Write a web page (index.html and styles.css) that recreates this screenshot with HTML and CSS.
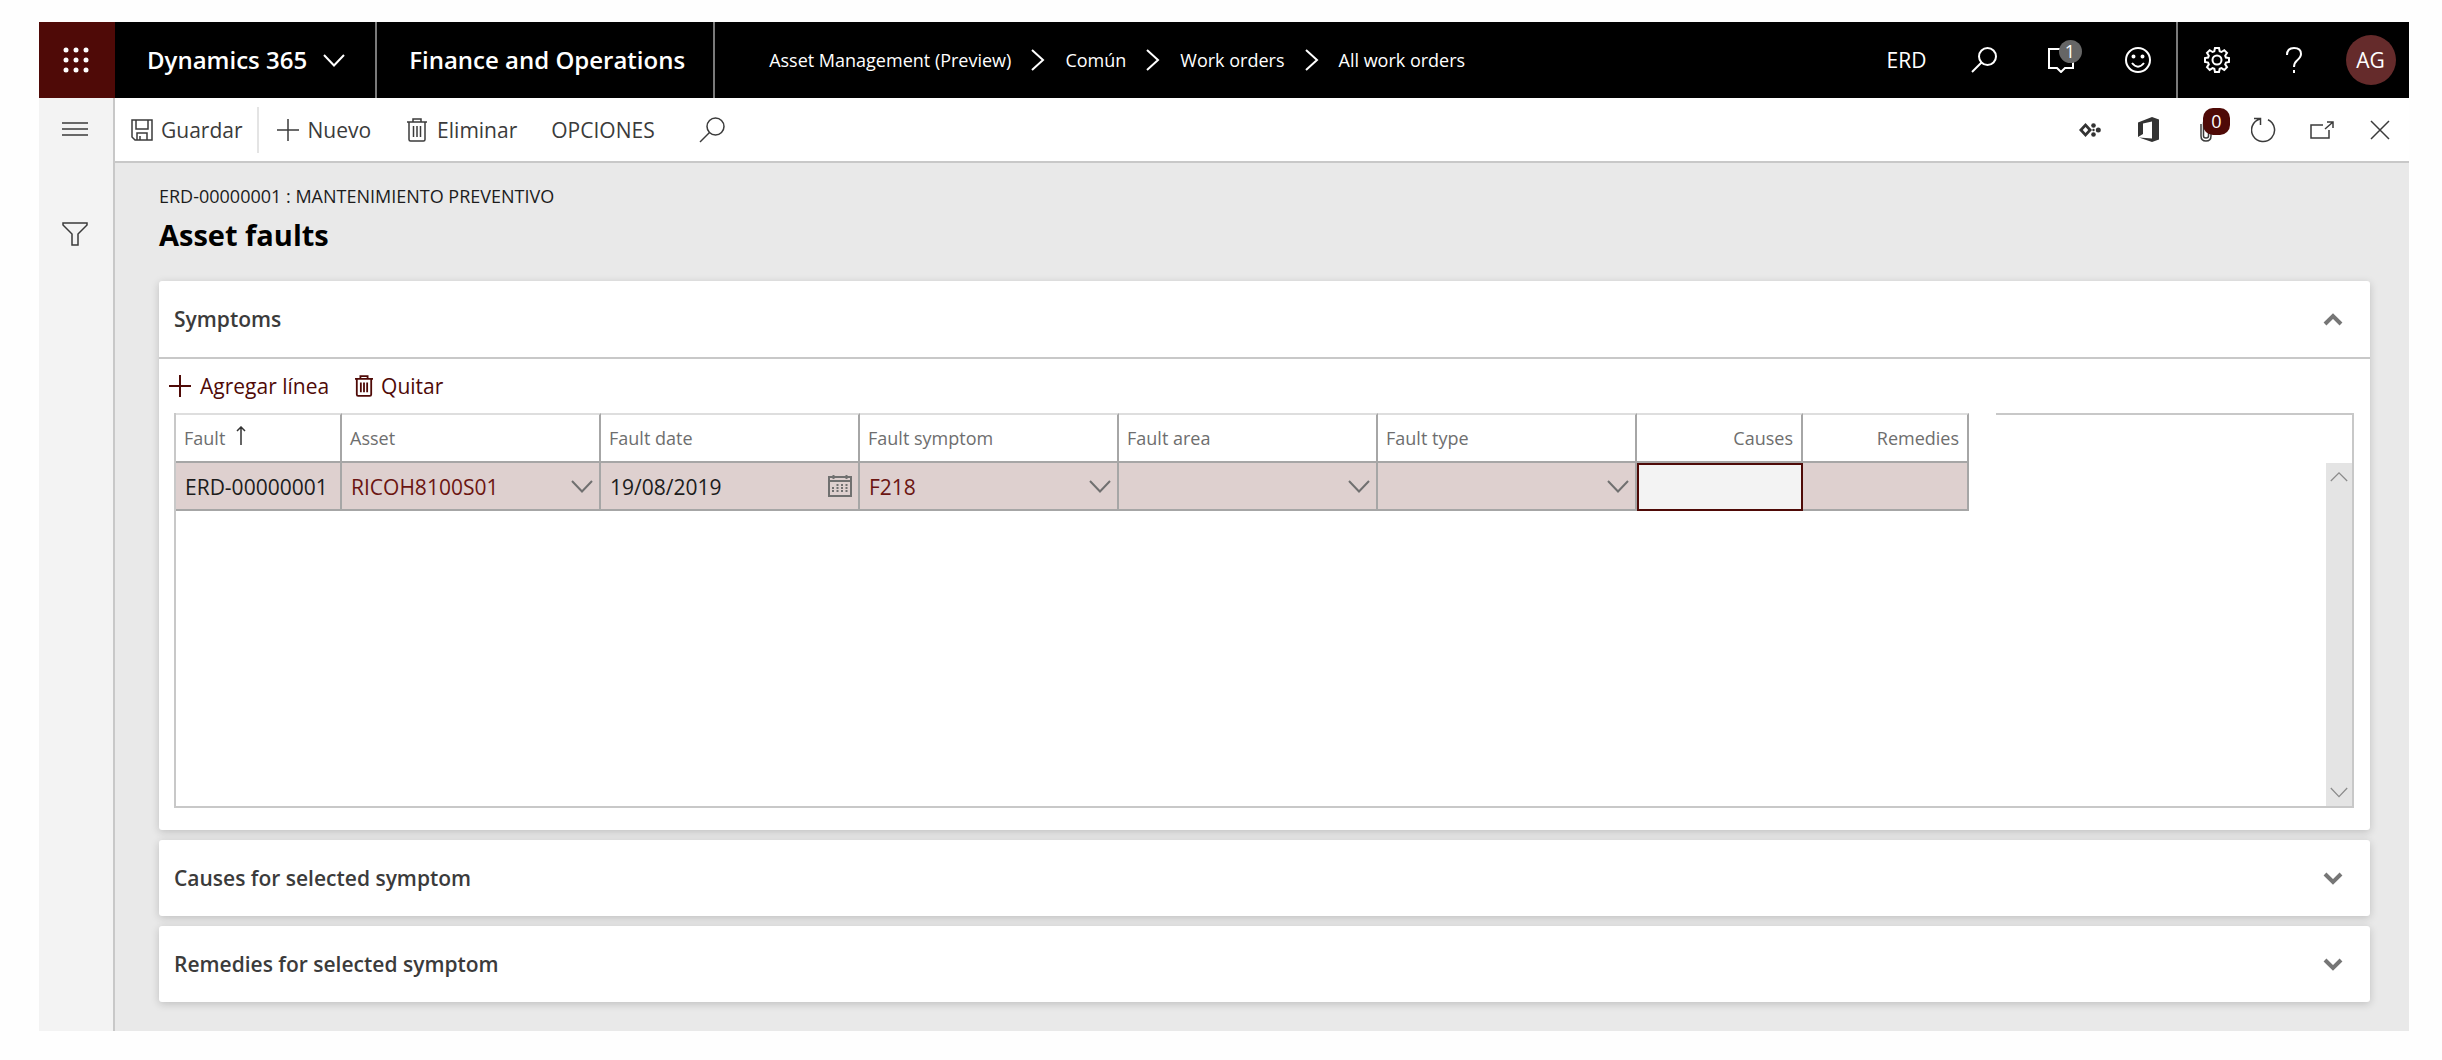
FILE: index.html
```html
<!DOCTYPE html>
<html lang="es">
<head>
  <meta charset="UTF-8">
  <title>Asset faults - Finance and Operations</title>
  <meta name="viewport" content="width=device-width, initial-scale=1.0">
  <link rel="stylesheet" href="styles.css">
</head>
<body>
  <!-- Shared icons -->
  <svg class="sprite" aria-hidden="true">
    <symbol id="chevron-down" viewBox="0 0 22 13"><path d="M1 1l10 10.500L21 1"/></symbol>
    <symbol id="chevron-right" viewBox="0 0 14 22"><path d="M1 1l11 10L1 21"/></symbol>
    <symbol id="search" viewBox="0 0 26 26"><circle cx="16.500" cy="9.500" r="8.500"/><path d="M10.500 15.500L1 25"/></symbol>
    <symbol id="plus" viewBox="0 0 24 24"><path d="M12 1v22M1 12h22"/></symbol>
    <symbol id="trash" viewBox="0 0 20 24"><path d="M0 4h20M6 4V1h8v3M2 4v17.500q0 1.500 1.500 1.500h13q1.500 0 1.500-1.500V4M6.500 8v11M10 8v11M13.500 8v11"/></symbol>
    <symbol id="calendar" viewBox="0 0 24 22"><path d="M1 2h22v19H1zM1 6h22M5.500 0v4M18.500 0v4"/><path stroke-dasharray="2 1" d="M9.500 9v8M14 9v8M18.500 9v8M5 12v6"/></symbol>
  </svg>

  <div class="app">
    <header class="topbar">
      <button class="waffle" aria-label="App launcher">
        <svg width="26" height="26" viewBox="0 0 26 26" fill="#fff">
          <circle cx="3" cy="3" r="2.500"/><circle cx="13" cy="3" r="2.500"/><circle cx="23" cy="3" r="2.500"/>
          <circle cx="3" cy="13" r="2.500"/><circle cx="13" cy="13" r="2.500"/><circle cx="23" cy="13" r="2.500"/>
          <circle cx="3" cy="23" r="2.500"/><circle cx="13" cy="23" r="2.500"/><circle cx="23" cy="23" r="2.500"/>
        </svg>
      </button>
      <button class="brand">Dynamics 365 <svg class="icon" width="22" height="13"><use href="#chevron-down"/></svg></button>
      <a class="product" href="#">Finance and Operations</a>
      <nav class="breadcrumb" aria-label="Breadcrumb">
        <a href="#">Asset Management (Preview)</a>
        <svg class="icon" width="14" height="22"><use href="#chevron-right"/></svg>
        <a href="#">Común</a>
        <svg class="icon" width="14" height="22"><use href="#chevron-right"/></svg>
        <a href="#">Work orders</a>
        <svg class="icon" width="14" height="22"><use href="#chevron-right"/></svg>
        <a href="#">All work orders</a>
      </nav>
      <div class="top-actions">
        <button class="company">ERD</button>
        <button aria-label="Search"><svg class="icon" width="26" height="26"><use href="#search"/></svg></button>
        <button aria-label="Messages">
          <span class="badged">
            <svg class="icon" width="26" height="26" viewBox="0 0 26 26"><path d="M1 2h24v19h-8l-4 4-4-4H1z"/></svg>
            <span class="badge badge-grey">1</span>
          </span>
        </button>
        <button aria-label="Feedback">
          <svg class="icon" width="26" height="26" viewBox="0 0 26 26"><circle cx="13" cy="13" r="12"/><path d="M7 16q6 7.500 12 0"/><circle class="solid" cx="8.500" cy="9.500" r="1"/><circle class="solid" cx="17.500" cy="9.500" r="1"/></svg>
        </button>
        <button class="divided" aria-label="Settings">
          <svg class="icon" width="26" height="26" viewBox="0 0 26 26"><circle cx="13" cy="13" r="4.500"/><path d="M11 1h4l.7 3.300 1.700.7 2.900-1.800 2.700 2.700-1.800 2.900.7 1.700L25 11v4l-3.100.6-.7 1.700 1.800 2.900-2.700 2.700-2.900-1.800-1.700.7L15 25h-4l-.7-3.200-1.700-.7-2.900 1.800L3 20.200l1.800-2.900-.7-1.700L1 15v-4l3.100-.5.700-1.700L3 5.900l2.700-2.700L8.600 5l1.700-.7z"/></svg>
        </button>
        <button aria-label="Help">
          <svg class="icon" width="18" height="26" viewBox="0 0 18 26"><path d="M2 8q0-7 7-7t7 6q0 3-4 6.500-3 2.500-3 6.500M9 23v3"/></svg>
        </button>
        <button aria-label="Account"><span class="avatar">AG</span></button>
      </div>
    </header>

    <div class="main">
      <aside class="rail">
        <button aria-label="Menu"><svg class="icon" width="26" height="14" viewBox="0 0 26 14"><path d="M0 1h26M0 7h26M0 13h26"/></svg></button>
        <button aria-label="Filter"><svg class="icon" width="26" height="24" viewBox="0 0 26 24"><path d="M1 1h24v2l-9 9v11h-6V12L1 3z"/></svg></button>
      </aside>

      <div class="workspace">
        <div class="toolbar">
          <button class="save">
            <svg class="icon" width="22" height="22" viewBox="0 0 22 22"><path d="M1 1h20v20H4l-3-3zM5 1v9h12V1M6 21v-7h10v7M9 21v-4"/></svg>
            Guardar
          </button>
          <button class="new"><svg class="icon" width="24" height="24"><use href="#plus"/></svg>Nuevo</button>
          <button class="delete"><svg class="icon" width="20" height="24"><use href="#trash"/></svg>Eliminar</button>
          <button class="options">OPCIONES</button>
          <button class="find" aria-label="Search actions"><svg class="icon" width="26" height="26"><use href="#search"/></svg></button>
          <div class="page-actions">
            <button aria-label="Power Apps">
              <svg width="22" height="14" viewBox="0 0 22 14" fill="#333"><path d="M6.500 0L13 7l-6.500 7L0 7zM6.500 4L3.800 7l2.700 3 2.700-3z" fill-rule="evenodd"/><circle cx="14.500" cy="2.500" r="2.300"/><circle cx="14.500" cy="11.500" r="2.300"/><circle cx="19.300" cy="7" r="2.500"/><circle cx="14.500" cy="7" r="1.200"/></svg>
            </button>
            <button aria-label="Open in Microsoft Office">
              <svg width="21" height="25" viewBox="0 0 21 25" fill="#333"><path d="M0 5.500L14 0l7 2.500v20L14 25 1 20.500l13 1V4.500l-9 2V17l-5 3z"/></svg>
            </button>
            <button aria-label="Attachments">
              <span class="badged">
                <svg class="icon" width="12" height="24" viewBox="0 0 12 24"><path d="M8.500 6v12q0 2-2.500 2t-2.500-2V5Q3.500 1 7 1t4 4v13q0 5-5 5t-5-5V6"/></svg>
                <span class="badge badge-red">0</span>
              </span>
            </button>
            <button aria-label="Refresh">
              <svg class="icon" width="26" height="26" viewBox="0 0 26 26"><path d="M17 2.700A11.500 11.500 0 1 1 9 2M3 1.500h6.500V8"/></svg>
            </button>
            <button aria-label="Open in new window">
              <svg class="icon" width="24" height="18" viewBox="0 0 24 18"><path d="M13 4H1v13h18v-8M15 8l8-7M17 1h6v6"/></svg>
            </button>
            <button aria-label="Close">
              <svg class="icon" width="20" height="20" viewBox="0 0 20 20"><path d="M1 1l18 18M19 1L1 19"/></svg>
            </button>
          </div>
        </div>

        <main class="content">
          <p class="record">ERD-00000001 : MANTENIMIENTO PREVENTIVO</p>
          <h1>Asset faults</h1>

          <section class="card">
            <h2><button class="card-toggle" aria-expanded="true">Symptoms
              <svg class="icon" width="20" height="13" viewBox="0 0 20 13"><path d="M2 11l8-8 8 8"/></svg></button></h2>
            <div class="card-body">
              <div class="grid-actions">
                <button><svg class="icon" width="24" height="24"><use href="#plus"/></svg>Agregar línea</button>
                <button><svg class="icon" width="18" height="22"><use href="#trash"/></svg>Quitar</button>
              </div>

              <div class="grid">
                <div class="grid-columns">
                  <table>
                    <colgroup>
                      <col class="col-id"><col class="col-text"><col class="col-text"><col class="col-text">
                      <col class="col-text"><col class="col-text"><col class="col-count"><col class="col-count">
                    </colgroup>
                    <thead>
                      <tr>
                        <th>Fault <svg class="icon sort" width="10" height="19" viewBox="0 0 10 19"><path d="M5 19V1M1 5l4-4 4 4"/></svg></th>
                        <th>Asset</th>
                        <th>Fault date</th>
                        <th>Fault symptom</th>
                        <th>Fault area</th>
                        <th>Fault type</th>
                        <th class="number">Causes</th>
                        <th class="number">Remedies</th>
                      </tr>
                    </thead>
                    <tbody>
                      <tr>
                        <td><div class="cell"><input type="text" value="ERD-00000001" aria-label="Fault"></div></td>
                        <td><div class="cell lookup"><input type="text" value="RICOH8100S01" aria-label="Asset"><button aria-label="Open asset list"><svg class="icon" width="22" height="13"><use href="#chevron-down"/></svg></button></div></td>
                        <td><div class="cell"><input type="text" value="19/08/2019" aria-label="Fault date"><button aria-label="Open calendar"><svg class="icon" width="24" height="22"><use href="#calendar"/></svg></button></div></td>
                        <td><div class="cell lookup"><input type="text" value="F218" aria-label="Fault symptom"><button aria-label="Open symptom list"><svg class="icon" width="22" height="13"><use href="#chevron-down"/></svg></button></div></td>
                        <td><div class="cell lookup"><input type="text" aria-label="Fault area"><button aria-label="Open area list"><svg class="icon" width="22" height="13"><use href="#chevron-down"/></svg></button></div></td>
                        <td><div class="cell lookup"><input type="text" aria-label="Fault type"><button aria-label="Open type list"><svg class="icon" width="22" height="13"><use href="#chevron-down"/></svg></button></div></td>
                        <td class="active"><div class="cell"><input type="text" aria-label="Causes"></div></td>
                        <td><div class="cell"><input type="text" aria-label="Remedies"></div></td>
                      </tr>
                    </tbody>
                  </table>
                </div>
                <div class="grid-rest">
                  <div class="scrollbar">
                    <svg class="icon" width="18" height="11" viewBox="0 0 22 13"><path d="M1 12L11 2l10 10"/></svg>
                    <svg class="icon" width="18" height="11"><use href="#chevron-down"/></svg>
                  </div>
                </div>
              </div>
            </div>
          </section>

          <section class="card">
            <h2><button class="card-toggle" aria-expanded="false">Causes for selected symptom
              <svg class="icon" width="20" height="13" viewBox="0 0 20 13"><path d="M2 2l8 8 8-8"/></svg></button></h2>
          </section>

          <section class="card">
            <h2><button class="card-toggle" aria-expanded="false">Remedies for selected symptom
              <svg class="icon" width="20" height="13" viewBox="0 0 20 13"><path d="M2 2l8 8 8-8"/></svg></button></h2>
          </section>
        </main>
      </div>
    </div>
  </div>
</body>
</html>
```
FILE: styles.css
```css
:root {
  --accent: #4f0a07; /* Dark red */
  --row-selected: #ded0cf;
  --page-background: #e9e9e9;
  --rail-background: #f3f3f3;
  --line: #c8c8c8;
  --grid-line: #a6a6a6;
  --text-color: #3b3b3b;
}

* {
  box-sizing: border-box;
}

body {
  margin: 0;
  padding: 22px 33px 29px 39px;
  background: #fefefe;
  color: var(--text-color);
  font-family: "Open Sans", "Noto Sans", sans-serif;
  font-size: 21px;
  line-height: 28px;
}

button,
input {
  font: inherit;
  color: inherit;
  background: none;
  border: none;
  padding: 0;
  margin: 0;
}

button {
  display: flex;
  align-items: center;
  cursor: pointer;
  white-space: nowrap;
}

a {
  color: inherit;
  text-decoration: none;
}

.sprite {
  display: none;
}

.icon {
  fill: none;
  stroke: currentColor;
  stroke-width: 1.5;
  flex: none;
}

.icon .solid {
  fill: currentColor;
}

/* Top bar */
.topbar {
  display: flex;
  height: 76px;
  background: #000;
  color: #fff;
}

.topbar .icon {
  stroke-width: 2;
}

.waffle {
  width: 76px;
  padding-right: 2px;
  justify-content: center;
  background: var(--accent);
}

.brand,
.product {
  display: flex;
  align-items: center;
  border-right: 2px solid #7a7a7a;
  font-size: 24px;
  font-weight: 600;
  white-space: nowrap;
}

.brand {
  padding: 0 30px 0 32px;
  gap: 16px;
}

.product {
  padding: 0 28px 0 32px;
}

.breadcrumb {
  display: flex;
  align-items: center;
  gap: 20px;
  padding-left: 54px;
  font-size: 18px;
  white-space: nowrap;
}

.top-actions {
  display: flex;
  margin-left: auto;
}

.top-actions button {
  width: 77px;
  justify-content: center;
}

.top-actions .divided {
  width: 79px;
  border-left: 2px solid #7a7a7a;
}

.avatar {
  width: 50px;
  height: 50px;
  border-radius: 50%;
  background: #652b2b;
  line-height: 50px;
  text-align: center;
}

.badged {
  display: flex;
  position: relative;
}

.badge {
  position: absolute;
  text-align: center;
}

.badge-grey {
  top: -7px;
  right: -8px;
  width: 23px;
  height: 23px;
  border-radius: 50%;
  background: #666;
  font-size: 18px;
  line-height: 23px;
}

.badge-red {
  top: -10px;
  left: 3px;
  width: 27px;
  height: 27px;
  border-radius: 10px;
  background: var(--accent);
  color: #fff;
  font-size: 18px;
  line-height: 27px;
}

/* Left rail */
.main {
  display: flex;
}

.rail {
  width: 76px;
  flex: none;
  padding-top: 24px;
  background: var(--rail-background);
  border-right: 2px solid var(--line);
}

.rail button {
  width: 100%;
  height: 14px;
  padding-right: 2px;
  justify-content: center;
}

.rail button + button {
  height: 24px;
  margin-top: 86px;
}

.workspace {
  flex: 1;
  min-width: 0;
}

/* Action pane */
.toolbar {
  display: flex;
  align-items: center;
  height: 65px;
  background: #fff;
  border-bottom: 2px solid var(--line);
}

.toolbar button {
  gap: 8px;
}

.toolbar .save {
  height: 46px;
  padding: 0 14px 0 16px;
  border-right: 2px solid #e4e4e4;
}

.toolbar .new {
  padding-left: 17px;
}

.toolbar .delete {
  gap: 10px;
  padding-left: 36px;
}

.toolbar .options {
  padding-left: 34px;
}

.toolbar .find {
  padding-left: 44px;
}

.page-actions {
  display: flex;
  margin-left: auto;
}

.page-actions button {
  width: 58px;
  justify-content: center;
}

/* Page content */
.content {
  padding: 19px 39px 29px 44px;
  background: var(--page-background);
}

.record {
  margin: 0;
  color: #1c1c1c;
  font-size: 18px;
}

h1 {
  margin: 0 0 21px;
  color: #000;
  font-size: 29px;
  font-weight: 700;
  line-height: 50px;
}

h2 {
  margin: 0;
  font-size: 21px;
  font-weight: 600;
}

.card {
  background: #fff;
  border-radius: 3px;
  box-shadow: 0 2px 9px rgba(0, 0, 0, 0.18);
}

.card + .card {
  margin-top: 10px;
}

.card-toggle {
  width: 100%;
  height: 76px;
  padding: 0 27px 0 15px;
  justify-content: space-between;
}

.card-toggle .icon {
  color: #767676;
  stroke-width: 4;
}

.card-body {
  padding: 0 16px 22px 15px;
  border-top: 2px solid var(--line);
}

.grid-actions {
  display: flex;
  align-items: center;
  gap: 26px;
  height: 54px;
  margin-left: -6px;
  color: var(--accent);
}

.grid-actions button {
  gap: 8px;
}

.grid-actions .icon {
  stroke-width: 2;
}

/* Grid */
.grid {
  display: flex;
  height: 395px;
  border: 2px solid var(--line);
  border-top: none;
}

.grid-columns {
  padding-right: 27px;
}

.grid-rest {
  display: flex;
  justify-content: flex-end;
  flex: 1;
  padding-top: 48px;
  border-top: 2px solid var(--line);
}

table {
  width: 1793px;
  table-layout: fixed;
  border-collapse: separate;
  border-spacing: 0;
}

.col-id {
  width: 166px;
}

.col-text {
  width: 259px;
}

.col-count {
  width: 166px;
}

th,
td {
  padding: 0;
  border-right: 2px solid var(--grid-line);
  border-bottom: 2px solid var(--grid-line);
}

th {
  height: 50px;
  padding: 0 8px;
  border-top: 2px solid #dedede;
  color: #6e6e6e;
  font-size: 18px;
  font-weight: 400;
  text-align: left;
  white-space: nowrap;
}

th.number {
  text-align: right;
}

.sort {
  margin-left: 6px;
  color: #333;
}

td {
  height: 48px;
  background: var(--row-selected);
}

.cell {
  display: flex;
  align-items: center;
  height: 46px;
  padding: 0 6px 0 9px;
  color: #1c1c1c;
}

.cell input {
  flex: 1;
  width: 100%;
  min-width: 0;
  height: 30px;
  padding-top: 2px;
  outline: none;
}

.cell button {
  color: #707070;
}

.lookup input {
  color: #6b1512;
}

.cell .icon {
  stroke-width: 2;
}

.active {
  border-color: var(--accent);
}

.active .cell {
  border-top: 2px solid var(--accent);
  border-left: 2px solid var(--accent);
  background: #f3f3f3;
}

.scrollbar {
  display: flex;
  flex-direction: column;
  align-items: center;
  justify-content: space-between;
  width: 26px;
  padding: 8px 0;
  background: #e4e4e4;
  color: #8a8a8a;
}
```
